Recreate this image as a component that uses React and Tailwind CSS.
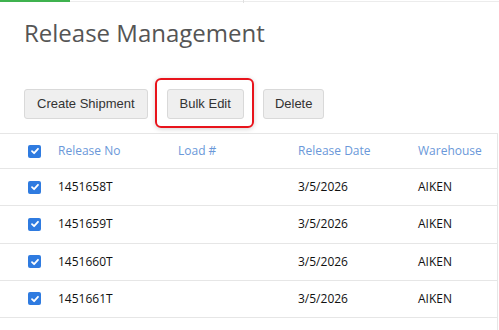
import React from "react";

const rows = ["1451658T", "1451659T", "1451660T", "1451661T", "1451662T"];

function Check() {
  return (
    <span className="flex h-[13px] w-[13px] items-center justify-center rounded-[2px] bg-[#2f7be0]">
      <svg width="10" height="10" viewBox="0 0 10 10">
        <path d="M2 5.2 L4.1 7.2 L8 2.8" fill="none" stroke="white" strokeWidth="1.8" strokeLinecap="round" strokeLinejoin="round" />
      </svg>
    </span>
  );
}

function Btn({ children, px = "px-3" }) {
  return (
    <button className={"h-[30px] rounded-[3px] border border-[#d9d9d9] bg-[#efefef] text-[13px] text-[#333] [font-family:'Liberation_Sans',Arial,sans-serif] " + px}>
      {children}
    </button>
  );
}

export default function App() {
  return (
    <div className="relative h-[330px] w-[499px] overflow-hidden bg-white [font-family:'Open_Sans',sans-serif]">
      <div className="flex h-[3px] items-start">
        <div className="h-[2px] w-[70px] bg-[#3fb24f]" />
        <div className="relative mt-[1px] h-[1px] flex-1 bg-[#ececec]">
          <div className="absolute left-[173px] top-[-1px] h-[3px] w-[1px] bg-[#e0e0e0]" />
        </div>
      </div>
      <h1 className="mt-[14px] pl-6 text-[24px] leading-[32px] text-[#555]">Release Management</h1>
      <div className="mt-[40px] flex items-center pl-6">
        <Btn>Create Shipment</Btn>
        <div className="relative ml-[19px]">
          <div className="absolute -bottom-[9px] -left-[12px] -right-[10px] -top-[11px] rounded-[6px] border-2 border-[#e8141c] shadow-[0_1px_5px_rgba(0,0,0,0.18)]" />
          <Btn>Bulk Edit</Btn>
        </div>
        <div className="ml-[19px]">
          <Btn px="px-[11px]">Delete</Btn>
        </div>
      </div>
      <div className="mt-[14px] w-[498px] border-r border-t border-[#e6e6e6]">
        <div className="grid h-[34px] grid-cols-[58px_120px_120px_120px_1fr] items-center text-[12px] text-[#6a98d9]">
          <div className="pl-[28px]"><Check /></div>
          <div>Release No</div>
          <div>Load #</div>
          <div>Release Date</div>
          <div className="whitespace-nowrap">Warehouse</div>
        </div>
        {rows.map((r) => (
          <div key={r} className="grid h-[37.25px] grid-cols-[58px_120px_120px_120px_1fr] items-center border-t border-[#e6e6e6] text-[12px] text-[#111]">
            <div className="pl-[28px]"><Check /></div>
            <div>{r}</div>
            <div></div>
            <div>3/5/2026</div>
            <div>AIKEN</div>
          </div>
        ))}
      </div>
    </div>
  );
}
